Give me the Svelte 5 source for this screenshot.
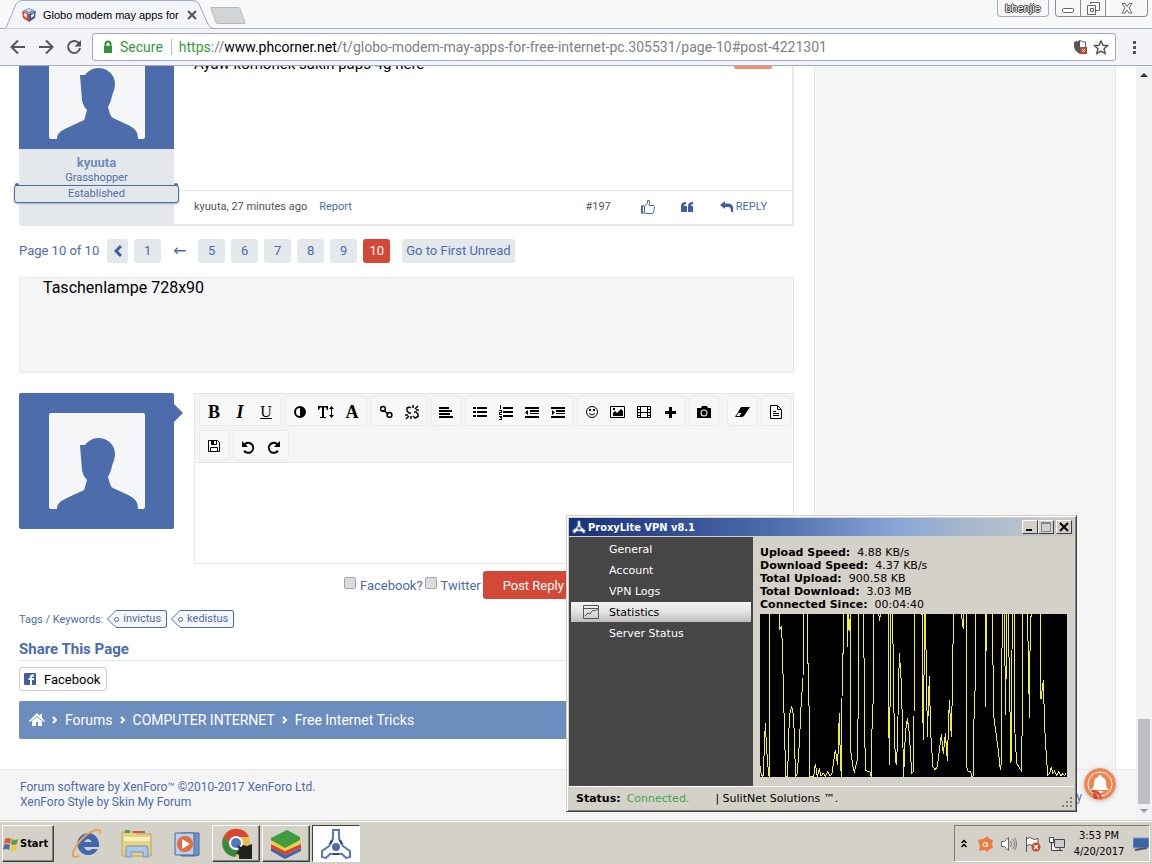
<script lang="ts">
    type Icon = { fill?: string; line?: string; text?: string; style?: string; label: string };

    const pages = ["5", "6", "7", "8", "9", "10"];
    const currentPage = "10";
    const tags = ["invictus", "kedistus"];
    const crumbs = ["Forums", "COMPUTER INTERNET", "Free Internet Tricks"];

    const menu = ["General", "Account", "VPN Logs", "Statistics", "Server Status"];
    let selected = $state("Statistics");
    let message = $state("");

    const stats = [
        ["Upload Speed", "4.88 KB/s"],
        ["Download Speed", "4.37 KB/s"],
        ["Total Upload", "900.58 KB"],
        ["Total Download", "3.03 MB"],
        ["Connected Since", "00:04:40"],
    ];

    // Traffic history, one run per stretch that stays on the chart
    const traffic = [
        "0,456 4,483 9,488 13,408 16,326 20,408 26,483 28,488 28,0",
        "58,0 60,46 65,36 68,138 71,258 75,408 78,488 83,488 86,358 90,298 95,276 101,308 104,408 107,488 112,478 118,388 124,258 129,198 130,0",
        "142,0 142,148 146,148 148,398 150,488 161,488 166,450 172,488 178,466 183,486 190,478 196,487 203,473 210,487 216,478 226,408 233,453 238,296 241,440 244,488 246,258 247,118 251,118 251,0",
        "262,0 263,98 265,0 268,50 271,0 273,418 279,458 283,473 292,438 296,198 296,0",
        "311,0 313,258 316,468 325,473 330,474 334,488 337,278 340,268 340,0",
        "356,0 359,20 361,0",
        "385,0 386,278 388,453 391,198 393,0",
        "398,0 401,258 406,438 410,453 414,308 418,116 424,208 428,358 431,488 436,358 442,313 448,358 455,478 460,473 462,318 463,0",
        "482,0 486,2 486,158 490,378 494,0",
        "496,0 500,208 502,368 508,186 512,358 519,458 525,468 532,458 538,408 544,360 550,420 556,358 562,440 568,258 574,370 578,188 580,0",
        "604,0 610,46 612,0",
        "618,0 620,458 625,473 632,474 636,488 640,486 643,238 646,228 646,0",
        "676,0 677,278 678,110 680,110 680,0",
        "698,0 700,298 708,358 715,408 721,468 725,438 725,158 728,0",
        "733,0 737,303 740,0",
        "745,0 748,188 753,448 757,0",
        "762,0 765,358 770,448 776,458 784,470 787,318 787,0",
        "802,0 806,158 808,313 811,15 815,0",
        "841,0 843,256 850,198 854,338 858,408 863,483 869,478 874,460 878,478 884,471 890,484 896,473 902,485 908,480 914,484 919,476",
    ];

    const toolRows: Icon[][][] = [
        [
            [
                { label: "Bold", text: "B" },
                { label: "Italic", text: "I", style: "italic" },
                { label: "Underline", text: "U", style: "underline" },
            ],
            [
                { label: "Text colour", fill: "M8 2a6 6 0 1 1 0 12A6 6 0 0 1 8 2zm0 2a4 4 0 0 0 0 8z" },
                {
                    label: "Font size",
                    fill: "M0 2h10v4H9L8 3.500H6V13h2v1H2v-1h2V3.500H2L1 6H0zM13.500 2l2.500 3h-2v6h2l-2.500 3L11 11h2V5h-2z",
                },
                { label: "Font family", text: "A" },
            ],
            [
                {
                    label: "Link",
                    style: "thick",
                    line: "M5 2.500a2.400 2.400 0 1 1 0 4.800 2.400 2.400 0 0 1 0-4.800zM11.500 8.500a2.400 2.400 0 1 1 0 4.800 2.400 2.400 0 0 1 0-4.800zM5.500 6l5 4.500",
                },
                {
                    label: "Unlink",
                    style: "thick",
                    line: "M7 4L5.500 3 3 4v3l2 2h2M9 12l2 2 3-1.500V10l-2-2h-2M9 1v3M11 5l3-3M12 6h3M1 11h3M5 12l-3 3M7 12v3",
                },
            ],
            [{ label: "Alignment", fill: "M1 3h10v2H1zM1 6h13v2H1zM1 9h11v2H1zM1 12h14v2H1z" }],
            [
                { label: "Bullet list", fill: "M1 3h3v2H1zM1 7h3v2H1zM1 11h3v2H1zM5 3h10v2H5zM5 7h10v2H5zM5 11h10v2H5z" },
                {
                    label: "Numbered list",
                    fill: "M2 1h1v4H2zM1 6h3v3H2v1h2v1H1V8h2V7H1zM1 12h3v4H1v-1h2v-1H2v-1H1zM5 3h10v2H5zM5 7h10v2H5zM5 11h10v2H5z",
                },
                { label: "Outdent", fill: "M1 3h14v2H1zM6 6h9v2H6zM6 9h9v1H6zM1 12h14v2H1zM1 8.500L4 6v5z" },
                { label: "Indent", fill: "M1 3h14v2H1zM6 6h9v2H6zM6 9h9v1H6zM1 12h14v2H1zM5 8.500L2 6v5z" },
            ],
            [
                {
                    label: "Smilies",
                    line: "M8 2.500a5.500 5.500 0 1 1 0 11 5.500 5.500 0 0 1 0-11zM5 9.500q3 3 6 0",
                    fill: "M5 5h2v2H5zM9 5h2v2H9z",
                },
                { label: "Image", line: "M.5 2.500h14v11H.5z", fill: "M3 4h2v2H3zM3 12V9l2-2 2 2 4-4 2 2v5z" },
                { label: "Media", line: "M1.500 2.500h13v11h-13zM4.500 2v12M11.500 2v12M4 8.500h8M1 5.500h3M1 8.500h3M1 11.500h3M12 5.500h3M12 8.500h3M12 11.500h3" },
                { label: "Insert", fill: "M7 3h3v4h4v3h-4v4H7v-4H3V7h4z" },
            ],
            [
                {
                    label: "Upload photo",
                    fill: "M1 4h4l1-2h5l1 2h3v10H1zM8 5.500a3.500 3.500 0 1 0 0 7 3.500 3.500 0 0 0 0-7zm0 1a2.500 2.500 0 1 1 0 5 2.500 2.500 0 0 1 0-5z",
                },
            ],
            [{ label: "Remove formatting", line: "M4.500 8.500h4l-3 4h-4z", fill: "M7 3h9l-6 9-2 1H5l3-4-4-1z" }],
            [{ label: "Templates", line: "M2.500 1.500h7l4 4v9h-11zM9.500 2v3.500h4M5 7.500h3M5 9.500h6M5 11.500h6" }],
        ],
        [
            [{ label: "Drafts", line: "M2.500 2.500h9l2 2v9h-11zM5.500 3v3.500h5V3M4.500 13V9.500h7V13", fill: "M6 3h2v3H6z" }],
            [
                { label: "Undo", fill: "M2 3v6h6L5.800 6.800A4 4 0 1 1 5 12l-1.800 1.200A6 6 0 1 0 4.300 5.200z" },
                { label: "Redo", fill: "M14 3v6H8l2.200-2.200A4 4 0 1 0 11 12l1.800 1.200A6 6 0 1 1 11.700 5.200z" },
            ],
        ],
    ];
</script>

{#snippet avatar()}
    <svg class="avatar" viewBox="0 0 96 96" aria-hidden="true">
        <rect width="96" height="96" rx="2" fill="#f5f6f7" />
        <path
            fill="#4c6cab"
            d="M8 96c0-7 6-9 12-12l13-6q3-1 3-4l2-7q-4-4-5-10l-1-12-1-13h5c3-4 8-7 13-7 10 0 17 7 17 16 0 5-2 8-3 12-1 5-2 7-4 11l2 7q1 3 3 4l13 6c6 3 12 5 12 15z"
        />
    </svg>
{/snippet}

{#snippet vpnLogo()}
    <svg class="vpn-logo" viewBox="0 0 32 32" aria-hidden="true">
        <path
            fill="#fff"
            stroke="#5878b8"
            stroke-width="2"
            d="M13 2h6v9l4 7 7 5v6l-4 1-4-4H10l-4 4-4-1v-6l7-5 4-7z"
        />
        <circle cx="16" cy="19" r="4" fill="#4c6cab" />
        <path stroke="#34466e" stroke-width="2" d="M12 12l-2 4M20 12l2 4M13 26h6" />
    </svg>
{/snippet}

<div class="desktop">
    <div class="browser">
        <header class="tab-strip">
            <div class="tab">
                <svg class="tab-shape" viewBox="0 0 208 29" aria-hidden="true">
                    <path d="M0 28.500C1 28 2 26 3 23L11 4q2-3.500 6-3.500h171q4 0 6 3.500l9 20q2 4.500 5 4.500" fill="#f2f4f7" stroke="#a4aabf" />
                </svg>
                <svg class="favicon" viewBox="0 0 16 16" aria-hidden="true">
                    <path d="M1 4l7-3 7 3-7 3z" fill="#7d9ccc" />
                    <path d="M1 4l7 3v8l-6-4z" fill="#d64c33" />
                    <path d="M15 4L8 7v8l6-4z" fill="#3d5c9c" />
                    <path d="M3 6l3 1v4l-3-2zM10 8l3-2v3l-3 2zM5 3l3-1 3 1-3 2z" fill="#f2ded5" />
                </svg>
                <span class="tab-title">Globo modem may apps for</span>
                <button class="tab-close" aria-label="Close tab">
                    <svg viewBox="0 0 10 10"><path d="M1 1l8 8M9 1L1 9" stroke="#555" stroke-width="2" /></svg>
                </button>
            </div>
            <button class="new-tab" aria-label="New tab"></button>
            <div class="window-controls">
                <button class="profile">bhenjie</button>
                <div class="caption-buttons">
                    <button aria-label="Minimize">
                        <svg viewBox="0 0 16 16"><rect x="2.500" y="8.500" width="11" height="4" rx="1" /></svg>
                    </button>
                    <button aria-label="Restore">
                        <svg viewBox="0 0 16 16"><path d="M5.500 4V2.500h9v8H11M2.500 5.500h8v9h-8zM5.500 8.500h3v3h-3z" /></svg>
                    </button>
                    <button class="wide" aria-label="Close">
                        <svg viewBox="0 0 16 16"><path d="M3 3.500h3l2 3 2-3h3L10 8l3 5h-3l-2-3-2 3H3l3-5z" /></svg>
                    </button>
                </div>
            </div>
        </header>

        <div class="toolbar">
            <button aria-label="Back"><svg viewBox="0 0 16 16"><path d="M15 8H2M8 1.500L1.500 8 8 14.500" /></svg></button>
            <button aria-label="Forward"><svg viewBox="0 0 16 16"><path d="M1 8h13M8 1.500L14.500 8 8 14.500" /></svg></button>
            <button aria-label="Reload">
                <svg viewBox="0 0 16 16"><path d="M13 4.500A6 6 0 1 0 14 9" /><path d="M15 1v6.500H8.500z" class="solid" /></svg>
            </button>
            <div class="address">
                <svg class="lock" viewBox="0 0 10 14" aria-hidden="true">
                    <path d="M2.500 6V4a2.500 2.500 0 0 1 5 0v2" fill="none" stroke="#2f9239" stroke-width="2" />
                    <rect x="1" y="6" width="8" height="7" fill="#2f9239" />
                </svg>
                <span class="secure">Secure</span>
                <span class="url"><i>https</i>://<b>www.phcorner.net</b>/t/globo-modem-may-apps-for-free-internet-pc.305531/page-10#post-4221301</span>
                <svg class="shield" viewBox="0 0 16 16" aria-hidden="true">
                    <path d="M8 1.500q3 2 5.500 1.500v4q0 5-5.500 7.500Q2.500 12 2.500 7V3Q5 3.500 8 1.500z" fill="#fff" stroke="#555" />
                    <path d="M8 1.500v13Q2.500 12 2.500 7V3Q5 3.500 8 1.500z" fill="#555" />
                    <path d="M8 8h7v7H8z" fill="#c2452f" />
                    <path d="M10 10l3 3M13 10l-3 3" stroke="#fff" />
                </svg>
                <svg class="star" viewBox="0 0 16 16" aria-hidden="true">
                    <path d="M8 2l2 4.300 4.500.4-3.400 3.100 1 4.600L8 12l-4.100 2.400 1-4.600-3.400-3.100 4.500-.4z" fill="none" stroke="#555" stroke-width="1.500" />
                </svg>
            </div>
            <button aria-label="Menu">
                <svg viewBox="0 0 16 16"><path class="solid" d="M7 2h3v3H7zM7 7h3v3H7zM7 12h3v3H7z" /></svg>
            </button>
        </div>

        <div class="viewport">
            <div class="page">
                <div class="columns">
                    <main>
                        <article class="post">
                            <div class="user">
                                <div class="user-avatar">{@render avatar()}</div>
                                <a class="user-name" href="#kyuuta">kyuuta</a>
                                <span class="user-title">Grasshopper</span>
                                <em class="banner">Established</em>
                            </div>
                            <div class="post-body">
                                <div class="post-content">
                                    <p>Ayaw komonek sakin paps 4g here</p>
                                    <span class="new-flag"></span>
                                </div>
                                <div class="post-meta">
                                    <span class="muted">kyuuta, 27 minutes ago</span>
                                    <a href="#report">Report</a>
                                    <a class="number muted" href="#197">#197</a>
                                    <button class="like" aria-label="Like">
                                        <svg viewBox="0 0 16 16">
                                            <path d="M4.500 7.500l3-3.500V1.500h2V4L9 6.500h5l.5 1-1 6-1.500 1H6l-1.500-1zM1.500 7v7h3V7z" fill="none" stroke="#4c6cab" />
                                            <path d="M1 6.500h2v8H1z" fill="#4c6cab" />
                                        </svg>
                                    </button>
                                    <button aria-label="Quote">
                                        <svg viewBox="0 0 14 12" class="quote">
                                            <path d="M1 5q0-4 5-4v2q-2 0-2 2h3v6H1zM8 5q0-4 5-4v2q-2 0-2 2h2v6H8z" fill="#3f5fa4" />
                                        </svg>
                                    </button>
                                    <button class="reply-link">
                                        <svg viewBox="0 0 14 14" class="arrow">
                                            <path d="M0 5l5-4v2.500h3c4 0 6 3 5 8.500h-2c0-4-1-5-3-5H5V9z" fill="#3f5fa4" />
                                        </svg>
                                        REPLY
                                    </button>
                                </div>
                            </div>
                        </article>

                        <nav class="pager">
                            <span>Page 10 of 10</span>
                            <a class="prev" href="#page-9" aria-label="Previous page">
                                <svg viewBox="0 0 8 12"><path d="M7 1L2 6l5 5" fill="none" stroke="#3f5fa4" stroke-width="3" /></svg>
                            </a>
                            <a href="#page-1">1</a>
                            <span class="gap">←</span>
                            {#each pages as page}
                                <a href="#page-{page}" class:current={page === currentPage}>{page}</a>
                            {/each}
                            <a class="unread" href="#unread">Go to First Unread</a>
                        </nav>

                        <div class="ad">Taschenlampe 728x90</div>

                        <div class="quick-reply">
                            <div class="self-avatar">{@render avatar()}</div>
                            <form onsubmit={(e) => e.preventDefault()}>
                                <div class="editor">
                                    <div class="tools">
                                        {#each toolRows as row}
                                            <div class="tool-row">
                                                {#each row as group}
                                                    <div class="tool-group">
                                                        {#each group as tool}
                                                            <button type="button" aria-label={tool.label}>
                                                                {#if tool.text}
                                                                    <span class="glyph {tool.style ?? ''}">{tool.text}</span>
                                                                {:else}
                                                                    <svg viewBox="0 0 16 16">
                                                                        {#if tool.fill}<path d={tool.fill} fill-rule="evenodd" />{/if}
                                                                        {#if tool.line}<path d={tool.line} class="line {tool.style ?? ''}" />{/if}
                                                                    </svg>
                                                                {/if}
                                                            </button>
                                                        {/each}
                                                    </div>
                                                {/each}
                                            </div>
                                        {/each}
                                    </div>
                                    <textarea aria-label="Reply" bind:value={message}></textarea>
                                </div>
                                <div class="submit-row">
                                    <label><input type="checkbox" />Facebook?</label>
                                    <label><input type="checkbox" />Twitter</label>
                                    <button class="primary">Post Reply</button>
                                </div>
                            </form>
                        </div>

                        <div class="tags">
                            <span>Tags / Keywords:</span>
                            {#each tags as tag}
                                <a class="tag" href="#{tag}">
                                    <svg viewBox="0 0 14 18" aria-hidden="true">
                                        <path d="M14 .5H9L.5 9 9 17.500h5" fill="#f5f7fa" stroke="#4c6cab" />
                                        <circle cx="9.500" cy="9.500" r="2" fill="#fff" stroke="#4c6cab" />
                                    </svg>
                                    <span>{tag}</span>
                                </a>
                            {/each}
                        </div>

                        <h3>Share This Page</h3>
                        <button class="share">
                            <svg viewBox="0 0 12 12" aria-hidden="true">
                                <rect width="12" height="12" rx="1" fill="#3f5fa4" />
                                <path d="M6 12V7H4.500V5H6V4q0-2.500 2.500-2.500H10v2H9q-1 0-1 1V5h2v2H8v5z" fill="#fff" />
                            </svg>
                            Facebook
                        </button>

                        <nav class="breadcrumb">
                            <a href="#home" aria-label="Home">
                                <svg viewBox="0 0 16 14" class="home">
                                    <path d="M8 0l3 3V1h2v4l3 3-1 1-7-6-7 6-1-1zM3 8l5-4 5 4v5H9V9H7v4H3z" fill="#fff" />
                                </svg>
                            </a>
                            {#each crumbs as crumb}
                                <svg viewBox="0 0 6 8" class="chevron" aria-hidden="true">
                                    <path d="M1 1l3 3-3 3" fill="none" stroke="#fff" stroke-width="2" />
                                </svg>
                                <a href="#{crumb}">{crumb}</a>
                            {/each}
                        </nav>
                    </main>
                    <aside></aside>
                </div>
                <footer>
                    <div>
                        <a href="#xenforo">Forum software by XenForo™ ©2010-2017 XenForo Ltd.</a>
                        <a href="#style">XenForo Style by Skin My Forum</a>
                    </div>
                    <a class="policy" href="#policy">y</a>
                </footer>
                <button class="bell" aria-label="Notifications">
                    <svg viewBox="0 0 32 32">
                        <circle cx="16" cy="16" r="16" fill="#f0854f" />
                        <circle cx="16" cy="16" r="12" fill="none" stroke="#fff" />
                        <path d="M16 7c1 0 2 1 2 2 3 1 4 3 4 6 0 4 1 5 3 7H7c2-2 3-3 3-7 0-3 1-5 4-6 0-1 1-2 2-2zM14 23h5l-1 2h-3z" fill="#fff" />
                        <path d="M8 23q8 0 9 8M9 26q4 1 4 5M9 29h2v2" fill="none" stroke="#d6452c" stroke-width="2" />
                    </svg>
                </button>
            </div>
            <div class="scrollbar">
                <svg viewBox="0 0 8 4"><path d="M0 4l4-4 4 4z" fill="#333" /></svg>
                <span class="thumb"></span>
                <svg viewBox="0 0 8 4"><path d="M0 0h8L4 4z" fill="#999" /></svg>
            </div>
        </div>
    </div>

    <section class="vpn" aria-label="ProxyLite VPN">
        <div class="vpn-title">
            {@render vpnLogo()}
            <span>ProxyLite VPN v8.1</span>
            <button aria-label="Minimize"><svg viewBox="0 0 14 12"><path d="M3 8h6v2H3z" fill="#000" /></svg></button>
            <button aria-label="Maximize">
                <svg viewBox="0 0 14 12"><path d="M2.500 1.500h9v9h-9zM3 2.500h8" fill="none" stroke="#888" /></svg>
            </button>
            <button class="last" aria-label="Close">
                <svg viewBox="0 0 14 12"><path d="M3 2l8 8M11 2l-8 8" stroke="#000" stroke-width="2" /></svg>
            </button>
        </div>
        <div class="vpn-body">
            <nav>
                {#each menu as item}
                    <button class:selected={item === selected} onclick={() => (selected = item)}>
                        {#if item === selected}
                            <svg viewBox="0 0 16 14" aria-hidden="true">
                                <path d="M.5.500h15v13H.500zM.500 3.500h15M2 11l3-3 2 1 3-4 2 1 3-2" fill="none" stroke="#555" />
                            </svg>
                        {/if}
                        <span>{item}</span>
                    </button>
                {/each}
            </nav>
            <div class="vpn-main">
                <dl>
                    {#each stats as [name, value]}
                        <div><dt>{name}:</dt><dd>{value}</dd></div>
                    {/each}
                </dl>
                <svg class="chart" viewBox="0 0 921 489" preserveAspectRatio="none" role="img" aria-label="Traffic">
                    {#each traffic as points}
                        <polyline {points} />
                    {/each}
                </svg>
            </div>
        </div>
        <div class="vpn-status">
            <b>Status:</b>
            <span class="ok">Connected.</span>
            <span>| SulitNet Solutions ™.</span>
            <svg viewBox="0 0 12 12" aria-hidden="true">
                <path d="M8 0h2v2H8zM4 4h2v2H4zM8 4h2v2H8zM0 8h2v2H0zM4 8h2v2H4zM8 8h2v2H8z" fill="#808078" />
            </svg>
        </div>
    </section>

    <div class="taskbar">
        <button class="start">
            <svg viewBox="0 0 16 16" aria-hidden="true">
                <path d="M2 3q3-2 6 0L7 8q-3-2-6 0z" fill="#e2572f" />
                <path d="M9 3q3 2 6 0l-1 5q-3 2-6 0z" fill="#5aa23c" />
                <path d="M1 9q3-2 6 0l-1 5q-3-2-6 0z" fill="#4c6cab" />
                <path d="M8 9q3 2 6 0l-1 5q-3 2-6 0z" fill="#f2c534" />
            </svg>
            Start
        </button>
        <button class="app" aria-label="Internet Explorer">
            <svg viewBox="0 0 32 32">
                <path d="M17 5a11 11 0 1 0 10 16h-6q-5 4-8-2h15c1-8-4-14-11-14zm-4 9q4-6 8 0z" fill="#3f68b0" fill-rule="evenodd" />
                <path d="M29 6q2-5-4-4C16 4 5 15 2 25q-1 6 6 3" fill="none" stroke="#eda054" stroke-width="2" />
            </svg>
        </button>
        <button class="app" aria-label="Windows Explorer">
            <svg viewBox="0 0 32 32">
                <path d="M1 4h13l2 2h14v22H1z" fill="#e9d27c" stroke="#b3a46c" />
                <path d="M4 2h5v3H4z" fill="#4ba34f" />
                <path d="M12 3h12v2H12z" fill="#cc5b45" />
                <path d="M3 9h26v4H3z" fill="#f7efc4" />
                <path d="M5 28v-8q0-2 2-2h18q2 0 2 2v9h-5v-5H10v5H5z" fill="#a9c6e8" stroke="#6f91bd" />
            </svg>
        </button>
        <button class="app" aria-label="Media Player">
            <svg viewBox="0 0 32 32">
                <path d="M10 5h18v22l-4 1H10z" fill="#6f92c8" stroke="#48689f" />
                <path d="M4 5h19v22H4z" fill="#b9cfea" stroke="#48689f" />
                <circle cx="14" cy="16" r="8" fill="#e8693a" />
                <path d="M11 11l8 5-8 5z" fill="#fff" />
            </svg>
        </button>
        <button class="app open" aria-label="Chrome">
            <svg viewBox="0 0 32 32">
                <circle cx="16" cy="15" r="14" fill="#e6c14a" />
                <path d="M4 8a14 14 0 0 1 25 1H16a6 6 0 0 0-6 7z" fill="#d8452f" />
                <path d="M4 8a14 14 0 0 0 11 21l5-9a6 6 0 0 1-9-2z" fill="#37883c" />
                <circle cx="16" cy="15" r="6" fill="#4c7bc4" stroke="#fff" stroke-width="2" />
                <path d="M17 17l4 2 2-2 4 1 5-2v15H19v-4l-3-2 3-3z" fill="#20241c" />
            </svg>
        </button>
        <button class="app open" aria-label="BlueStacks">
            <svg viewBox="0 0 32 32">
                <path d="M1 19l14 8 16-7v3l-16 8L1 23z" fill="#3d66ad" />
                <path d="M1 16l14 7 16-7v4l-16 7-14-7z" fill="#d9442d" />
                <path d="M1 12l14 8 16-8v3l-16 8-14-7z" fill="#f0cf3a" />
                <path d="M1 10L17 2l13 7v3l-15 8-14-8z" fill="#3f9b3d" />
            </svg>
        </button>
        <button class="app open active" aria-label="ProxyLite VPN">{@render vpnLogo()}</button>
        <div class="tray">
            <svg class="tray-expand" viewBox="0 0 6 10" aria-hidden="true">
                <path d="M.5 4L3 1.500 5.500 4M.5 8L3 5.500 5.500 8" fill="none" stroke="#000" stroke-width="1.500" />
            </svg>
            <svg viewBox="0 0 16 16" aria-hidden="true">
                <path d="M1 4l5-1 5-3 1 3 4 1-1 4 1 3-4 3-2 2-2-2-6 1 1-5z" fill="#ee7b3e" />
                <path d="M10 6v5M10 8.500a2 2 0 1 1-4 0 2 2 0 0 1 4 0" fill="none" stroke="#fff" />
            </svg>
            <svg viewBox="0 0 16 16" aria-hidden="true">
                <path d="M.5 5.500h3l4-4v13l-4-4h-3z" fill="#fff" stroke="#666" />
                <path d="M9.500 5q2 3 0 6M11.500 3q4 5 0 10M13.500 1.500q4 6 0 13" fill="none" stroke="#777" />
            </svg>
            <svg viewBox="0 0 16 16" aria-hidden="true">
                <path d="M1.500 1v15M2 2.500q3-2 5 0t6 0v7q-4 2-6 0t-5 0" fill="#fff" stroke="#555" />
                <circle cx="11" cy="11" r="4.500" fill="#d1412c" />
                <path d="M9 9l4 4M13 9l-4 4" stroke="#fff" stroke-width="1.500" />
            </svg>
            <svg viewBox="0 0 16 16" aria-hidden="true">
                <path d="M5.500 3.500h10v8h-10zM8 14.500h6M11 12v2" fill="#c8ccd4" stroke="#444" />
                <path d="M.5 1.500h4v5h-4zM2.500 7v7.500H8" fill="#fff" stroke="#444" />
            </svg>
            <div class="clock"><span>3:53 PM</span><span>4/20/2017</span></div>
            <svg viewBox="0 0 16 16" aria-hidden="true">
                <path d="M0 2h16v9l-4 1H0z" fill="#3c62a8" stroke="#7e9ccd" />
                <path d="M2 14l12-2" stroke="#555" stroke-width="2" />
            </svg>
        </div>
    </div>
</div>

<style>
    :global(body) {
        margin: 0;
    }

    .desktop {
        position: relative;
        display: flex;
        flex-direction: column;
        height: 100vh;
        overflow: hidden;
        background: #fff;
        color: #4c6cab;
        font-family: Roboto, sans-serif;
        font-size: 13px;
    }

    .desktop :global(*) {
        box-sizing: border-box;
    }

    svg {
        display: block;
        flex: none;
    }

    button {
        margin: 0;
        padding: 0;
        border: 0;
        background: none;
        color: inherit;
        font: inherit;
        cursor: pointer;
    }

    a {
        color: inherit;
        text-decoration: none;
    }

    .browser {
        display: flex;
        flex: 1;
        flex-direction: column;
        min-height: 0;
    }

    /* Tab strip */
    .tab-strip {
        display: flex;
        height: 29px;
        padding-left: 5px;
        background: linear-gradient(#a4aabf, #a4aabf) bottom / 100% 1px no-repeat #f8f8f9;
        font-family: "Liberation Sans", sans-serif;
        font-size: 11px;
    }

    .tab {
        position: relative;
        display: flex;
        align-items: center;
        width: 208px;
        padding: 0 19px 0 16px;
        color: #000;
    }

    .tab-shape {
        position: absolute;
        inset: 0;
        width: 208px;
        height: 29px;
    }

    .favicon {
        position: relative;
        width: 16px;
        height: 16px;
    }

    .tab-title {
        position: relative;
        flex: 1;
        margin-left: 6px;
        white-space: nowrap;
    }

    .tab-close {
        position: relative;
        margin-left: 8px;
    }

    .tab-close svg {
        width: 10px;
        height: 10px;
    }

    .new-tab {
        width: 30px;
        height: 17px;
        margin: 7px 0 0 0;
        border: 1px solid #b5b8be;
        border-radius: 2px;
        background: #d3d4d6;
        transform: skewX(20deg);
    }

    .window-controls {
        display: flex;
        gap: 6px;
        height: 17px;
        margin-left: auto;
        padding-right: 4px;
    }

    .profile {
        width: 52px;
        border: 1px solid #a4aabf;
        border-top: 0;
        border-radius: 0 0 4px 4px;
        color: #fff;
        text-shadow: 1px 0 #333, -1px 0 #333, 0 1px #333, 0 -1px #333;
    }

    .caption-buttons {
        display: flex;
        border: 1px solid #888c96;
        border-top: 0;
        border-radius: 0 0 4px 4px;
    }

    .caption-buttons button {
        display: grid;
        place-items: center;
        width: 25px;
        border-right: 1px solid #888c96;
    }

    .caption-buttons .wide {
        width: 41px;
        border-right: 0;
    }

    .caption-buttons svg {
        width: 16px;
        height: 16px;
        fill: #fff;
        stroke: #666;
    }

    /* Navigation bar */
    .toolbar {
        display: flex;
        align-items: center;
        gap: 12px;
        height: 37px;
        padding: 0 10px;
        border-bottom: 1px solid #a4aabf;
        background: #f2f4f7;
    }

    .toolbar button svg {
        width: 16px;
        height: 16px;
        fill: none;
        stroke: #555;
        stroke-width: 2;
    }

    .toolbar button .solid {
        fill: #555;
        stroke: none;
    }

    .address {
        display: flex;
        flex: 1;
        align-items: center;
        height: 28px;
        margin: 0 -2px;
        padding: 0 6px 0 10px;
        border: 1px solid #a4aabf;
        border-radius: 3px;
        background: #fff;
        color: #808080;
        font-size: 14px;
        line-height: 20px;
        white-space: nowrap;
    }

    .lock {
        width: 10px;
        height: 14px;
    }

    .secure {
        margin-left: 7px;
        padding-right: 8px;
        border-right: 1px solid #bbb;
        color: #389a3c;
        line-height: 16px;
    }

    .url {
        flex: 1;
        min-width: 0;
        padding-left: 7px;
        overflow: hidden;
    }

    .url i {
        color: #389a3c;
        font-style: normal;
    }

    .url b {
        color: #000;
        font-weight: 400;
    }

    .shield,
    .star {
        width: 16px;
        height: 16px;
        margin-left: 5px;
    }

    /* Page */
    .viewport {
        display: flex;
        flex: 1;
        min-height: 0;
    }

    .page {
        position: relative;
        display: flex;
        flex: 1;
        flex-direction: column;
        min-width: 0;
        overflow: hidden;
    }

    .columns {
        display: flex;
        flex: none;
        gap: 20px;
        margin-top: -20px;
        padding: 0 20px 0 19px;
    }

    main {
        flex: 1;
        min-width: 0;
        padding-bottom: 30px;
    }

    aside {
        width: 302px;
        border: solid #e4e8eb;
        border-width: 0 1px;
        background: #f5f5f5;
    }

    .avatar {
        width: 96px;
        height: 96px;
    }

    .post {
        display: flex;
        height: 180px;
    }

    .user {
        display: flex;
        flex: none;
        flex-direction: column;
        align-items: center;
        width: 155px;
        border-radius: 0 0 0 3px;
        background: #e4e8eb;
        text-align: center;
    }

    .user-avatar {
        display: flex;
        align-items: flex-end;
        justify-content: center;
        width: 100%;
        height: 103px;
        padding-bottom: 10px;
        background: #4c6cab;
    }

    .user-name {
        margin-top: 6px;
        color: #6c8ebf;
        font-weight: 700;
        line-height: 16px;
    }

    .user-title {
        font-size: 11px;
        line-height: 13px;
    }

    .banner {
        position: relative;
        width: 165px;
        margin-top: 1px;
        border: 1px solid #4c6cab;
        border-radius: 3px;
        background: #e4e8eb;
        box-shadow: 0 1px 2px #aab6c8;
        font-size: 11px;
        font-style: normal;
        line-height: 16px;
    }

    .banner::before,
    .banner::after {
        content: "";
        position: absolute;
        top: -3px;
        left: 0;
        width: 4px;
        height: 3px;
        border-radius: 2px 2px 0 0;
        background: #4c6cab;
    }

    .banner::after {
        right: 0;
        left: auto;
    }

    .post-body {
        display: flex;
        flex: 1;
        flex-direction: column;
        border: solid #e4e8eb;
        border-width: 0 2px 2px 0;
    }

    .post-content {
        display: flex;
        flex: 1;
        justify-content: space-between;
        padding: 8px 20px;
    }

    .post-content p {
        margin: 0;
        color: #000;
        font-size: 15px;
        line-height: 20px;
    }

    .new-flag {
        width: 38px;
        height: 15px;
        border-radius: 2px;
        background: #ef8e66;
    }

    .post-meta {
        display: flex;
        align-items: center;
        height: 34px;
        padding: 0 25px 2px 20px;
        border-top: 1px solid #e4e8eb;
        font-size: 11px;
    }

    .post-meta a {
        margin-left: 12px;
    }

    .muted {
        color: #555;
    }

    .post-meta .number {
        margin-left: auto;
    }

    .post-meta button {
        display: flex;
        align-items: center;
        gap: 2px;
        margin-left: 26px;
    }

    .post-meta .like {
        margin-left: 29px;
        margin-right: -2px;
    }

    .like svg {
        width: 16px;
        height: 16px;
    }

    .quote {
        width: 14px;
        height: 12px;
    }

    .arrow {
        width: 14px;
        height: 14px;
    }

    .pager {
        display: flex;
        align-items: center;
        gap: 6px;
        margin-top: 13px;
        line-height: 24px;
    }

    .pager a {
        width: 27px;
        border-radius: 3px;
        background: #e4e8eb;
        text-align: center;
    }

    .pager .prev {
        display: grid;
        place-items: center;
        width: 21px;
        height: 24px;
        margin-left: 2px;
    }

    .prev svg {
        width: 8px;
        height: 12px;
    }

    .pager .gap {
        width: 25px;
        font-family: "DejaVu Sans", sans-serif;
        font-size: 16px;
        text-align: center;
    }

    .pager .current {
        background: #d34836;
        color: #fff;
    }

    .pager .unread {
        width: auto;
        margin-left: 6px;
        padding: 0 4px;
    }

    .ad {
        height: 96px;
        margin-top: 14px;
        padding: 0 23px;
        border: 1px solid #e4e8eb;
        border-radius: 2px;
        background: #f5f5f5;
        color: #000;
        font-size: 16px;
        line-height: 20px;
    }

    .quick-reply {
        display: flex;
        align-items: flex-start;
        margin-top: 20px;
    }

    .self-avatar {
        position: relative;
        flex: none;
        width: 155px;
        margin-right: 20px;
        padding: 20px 30px;
        border-radius: 2px;
        background: #4c6cab;
    }

    .self-avatar::after {
        content: "";
        position: absolute;
        top: 11px;
        left: 100%;
        border: 9px solid transparent;
        border-right-width: 0;
        border-left-color: #4c6cab;
    }

    form {
        flex: 1;
        min-width: 0;
    }

    .editor {
        border: 1px solid #e4e8eb;
    }

    .tools {
        display: flex;
        flex-direction: column;
        gap: 4px;
        padding: 2px;
        padding-left: 4px;
        border-bottom: 1px solid #e4e8eb;
        background: #f5f5f5;
    }

    .tool-row {
        display: flex;
        gap: 4px;
    }

    .tool-group {
        display: flex;
        padding: 0 1px;
        border: 1px solid #e8ebed;
        border-radius: 2px;
        background: #f8f8f8;
    }

    .tool-group:nth-child(8) {
        margin-left: 4px;
    }

    .tool-group button {
        display: grid;
        place-items: center;
        width: 26px;
        height: 28px;
        padding-top: 1px;
        color: #000;
    }

    .tool-group svg {
        width: 16px;
        height: 16px;
    }

    .line {
        fill: none;
        stroke: #000;
    }

    .thick {
        stroke-width: 1.5;
    }

    .glyph {
        font-family: "Liberation Serif", serif;
        font-size: 18px;
        font-weight: 700;
        line-height: 20px;
    }

    .italic {
        font-style: italic;
    }

    .underline {
        font-size: 16px;
        font-weight: 400;
        text-decoration: underline;
    }

    textarea {
        display: block;
        width: 100%;
        height: 100px;
        border: 0;
        outline: 0;
        resize: none;
        font: inherit;
    }

    .submit-row {
        display: flex;
        align-items: center;
        gap: 2px;
        margin-top: 7px;
        padding-left: 150px;
    }

    .submit-row label {
        display: flex;
        align-items: center;
    }

    .submit-row input {
        appearance: none;
        width: 12px;
        height: 12px;
        margin: 0 4px 4px 0;
        border: 1px solid #a6a6a6;
        border-radius: 2px;
        background: #dcdcdc;
    }

    .primary {
        width: 101px;
        height: 28px;
        border-radius: 3px;
        background: #d34836;
        color: #fff;
    }

    .tags {
        display: flex;
        align-items: center;
        gap: 4px;
        height: 18px;
        margin-top: 11px;
        font-size: 11px;
    }

    .tag {
        display: flex;
        height: 18px;
        line-height: 16px;
    }

    .tag svg {
        width: 14px;
        height: 18px;
    }

    .tag span {
        padding: 0 5px 0 2px;
        border: solid #4c6cab;
        border-width: 1px 1px 1px 0;
        border-radius: 0 3px 3px 0;
        background: #f5f7fa;
    }

    h3 {
        margin: 11px 0 0;
        padding-bottom: 1px;
        border-bottom: 1px solid #e4e8eb;
        font-size: 15px;
        font-weight: 700;
        line-height: 20px;
    }

    .share {
        display: flex;
        align-items: center;
        gap: 8px;
        height: 24px;
        margin-top: 6px;
        padding: 0 6px 0 4px;
        border: 1px solid #ccc;
        border-radius: 3px;
        color: #000;
    }

    .share svg {
        width: 12px;
        height: 12px;
    }

    .breadcrumb {
        display: flex;
        align-items: center;
        gap: 7px;
        height: 38px;
        margin-top: 10px;
        padding: 0 10px;
        border-radius: 2px;
        background: #6c8ebf;
        color: #fff;
        font-size: 14px;
    }

    .home {
        width: 16px;
        height: 14px;
    }

    .chevron {
        width: 6px;
        height: 8px;
    }

    footer {
        display: flex;
        flex: 1;
        justify-content: space-between;
        padding: 10px 54px 0 20px;
        border-top: 1px solid #e4e8eb;
        background: #f5f5f5;
        font-size: 12px;
        line-height: 15px;
    }

    footer div {
        display: flex;
        flex-direction: column;
    }

    .policy {
        padding-top: 10px;
    }

    .bell {
        position: absolute;
        right: 20px;
        bottom: 20px;
    }

    .bell svg {
        width: 32px;
        height: 32px;
        border-radius: 50%;
        box-shadow: 0 1px 4px #bbb;
    }

    .scrollbar {
        display: flex;
        flex-direction: column;
        align-items: center;
        justify-content: space-between;
        width: 16px;
        padding: 7px 0;
        background: #f1f2f3;
    }

    .scrollbar svg {
        width: 8px;
        height: 4px;
    }

    .thumb {
        width: 12px;
        height: 85px;
        margin: auto 0 5px;
        background: #bcbfc1;
    }

    /* VPN window */
    .vpn {
        position: absolute;
        top: 515px;
        left: 566px;
        width: 511px;
        padding: 2px;
        border: 1px solid;
        border-color: #d4d0c8 #404040 #404040 #d4d0c8;
        background: #d4d1c9;
        box-shadow: inset 1px 1px #fff, inset -1px -1px #808080;
        color: #000;
        font-family: "DejaVu Sans", sans-serif;
        font-size: 11px;
    }

    .vpn-title {
        display: flex;
        align-items: center;
        height: 18px;
        padding: 0 2px 0 3px;
        background: linear-gradient(90deg, #17317a, #4c6cab 40%, #88a6d6 65%, #a9b9cb 80%, #c6cacd);
        color: #fff;
        font-family: "DejaVu Sans Condensed", sans-serif;
        font-weight: 700;
    }

    .vpn-logo {
        width: 14px;
        height: 14px;
    }

    .vpn-title span {
        flex: 1;
        margin-left: 2px;
    }

    .vpn-title button {
        border: 1px solid;
        border-color: #fff #404040 #404040 #fff;
        background: #d4d0c8;
    }

    .vpn-title .last {
        margin-left: 2px;
    }

    .vpn-title button svg {
        width: 14px;
        height: 12px;
    }

    .vpn-body {
        display: flex;
        margin-top: 1px;
        border-bottom: 1px solid #fff;
    }

    .vpn-body nav {
        display: flex;
        flex: none;
        flex-direction: column;
        gap: 1px;
        width: 184px;
        padding: 2px;
        background: #464646;
        color: #fff;
    }

    .vpn-body nav button {
        display: flex;
        align-items: center;
        justify-content: flex-end;
        height: 20px;
        padding-left: 12px;
    }

    .vpn-body nav .selected {
        background: linear-gradient(#f4f4f4, #e2e2e2 50%, #bdbdbd);
        color: #000;
    }

    .vpn-body nav svg {
        width: 16px;
        height: 14px;
    }

    .vpn-body nav span {
        width: 142px;
        margin-left: auto;
        text-align: left;
    }

    .vpn-main {
        flex: 1;
        min-width: 0;
        padding: 9px 7px;
    }

    dl {
        margin: 0;
    }

    dl div {
        display: flex;
        gap: 7px;
        line-height: 13px;
    }

    dt {
        font-weight: 700;
    }

    dd {
        margin: 0;
    }

    .chart {
        width: 100%;
        height: 163px;
        margin-top: 3px;
        background: #000;
    }

    .chart polyline {
        fill: none;
        stroke: #f1f12c;
        stroke-width: 3;
        shape-rendering: crispEdges;
    }

    .vpn-status {
        display: flex;
        align-items: center;
        gap: 6px;
        height: 22px;
        padding-left: 7px;
    }

    .ok {
        margin-right: 20px;
        color: #3fa648;
    }

    .vpn-status svg {
        width: 12px;
        height: 12px;
        margin-left: auto;
        align-self: flex-end;
    }

    /* Taskbar */
    .taskbar {
        display: flex;
        flex: none;
        align-items: center;
        height: 44px;
        padding: 4px 2px 2px;
        border-top: 1px solid #d4d1c9;
        background: #d4d1c9;
        box-shadow: inset 0 1px #fff;
        color: #000;
        font-family: "DejaVu Sans Condensed", sans-serif;
        font-size: 11px;
    }

    .start {
        display: flex;
        align-items: center;
        gap: 1px;
        width: 52px;
        height: 37px;
        margin-right: 8px;
        border: 1px solid;
        border-color: #fff #404040 #404040 #fff;
        box-shadow: inset -1px -1px #808080;
        font-weight: 700;
    }

    .start svg {
        width: 16px;
        height: 16px;
    }

    .app {
        display: grid;
        place-items: center;
        width: 50px;
        height: 37px;
    }

    .app svg {
        width: 32px;
        height: 32px;
    }

    .app.open {
        width: 48px;
        margin-right: 2px;
        border: 1px solid;
        border-color: #fff #404040 #404040 #fff;
        box-shadow: inset -1px -1px #808080;
    }

    .app.active {
        border-color: #404040 #fff #fff #404040;
        background: #fff;
        box-shadow: none;
    }

    .tray {
        display: flex;
        align-items: center;
        gap: 8px;
        height: 37px;
        margin-left: auto;
        padding-left: 6px;
        border: 1px solid;
        border-color: #808080 #fff #fff #808080;
    }

    .tray svg {
        width: 16px;
        height: 16px;
    }

    .tray .tray-expand {
        width: 6px;
        height: 10px;
        margin-right: 2px;
    }

    .clock {
        display: flex;
        flex-direction: column;
        align-items: center;
        width: 52px;
        line-height: 16px;
    }
</style>
